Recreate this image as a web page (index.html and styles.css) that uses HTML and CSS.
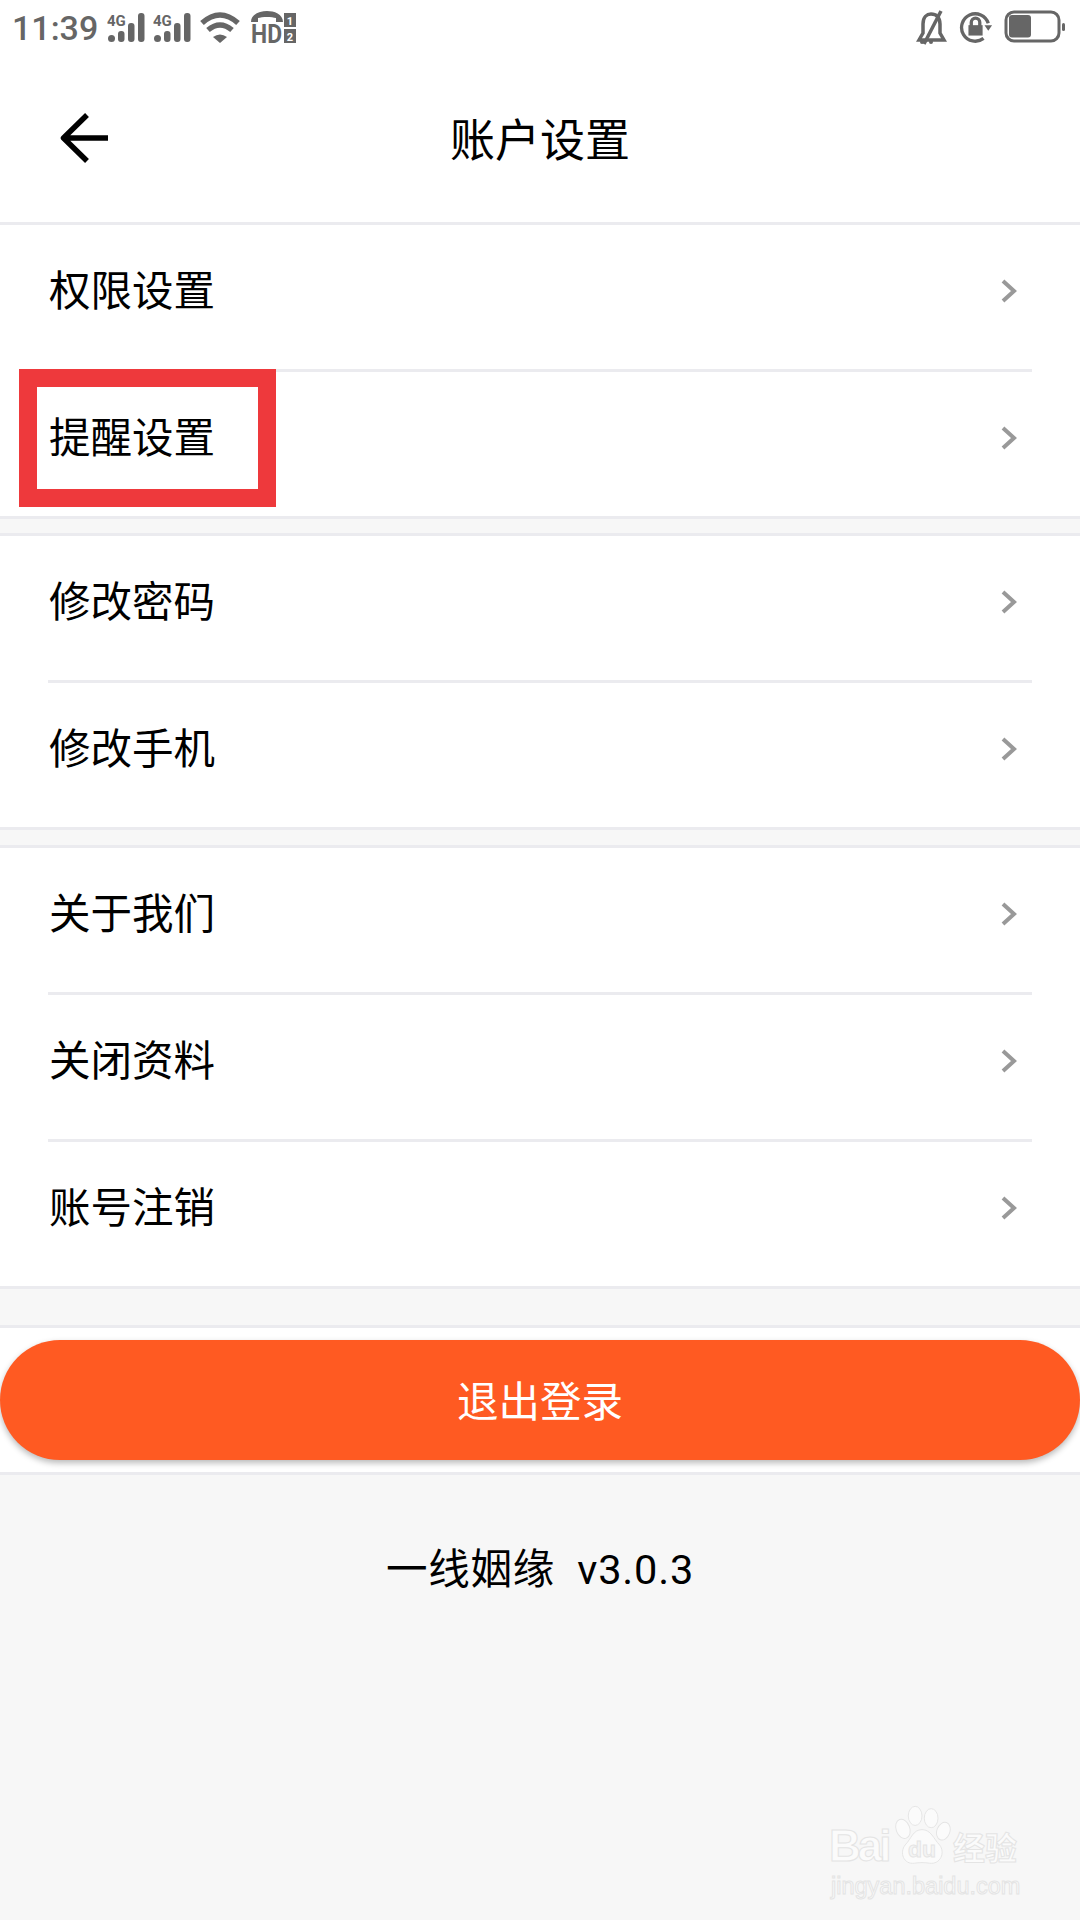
FILE: index.html
```html
<!DOCTYPE html>
<html lang="zh-CN">
<head>
<meta charset="utf-8">
<title>账户设置</title>
<link rel="stylesheet" href="styles.css">
</head>
<body>
<div class="page">
  <header class="top">
    <div class="status">
      <div class="status-left">
        <span class="time">11:39</span>
        <svg class="ic-signal" viewBox="0 0 40 34">
          <text class="t-4g" x="0" y="14">4G</text>
          <rect x="1" y="23" width="7" height="7" rx="3.5"/><rect x="11" y="19" width="6.5" height="11" rx="3"/><rect x="21" y="11" width="6.5" height="19" rx="3"/><rect x="31" y="1" width="6.5" height="29" rx="3"/>
        </svg>
        <svg class="ic-signal" viewBox="0 0 40 34">
          <text class="t-4g" x="0" y="14">4G</text>
          <rect x="1" y="23" width="7" height="7" rx="3.5"/><rect x="11" y="19" width="6.5" height="11" rx="3"/><rect x="21" y="11" width="6.5" height="19" rx="3"/><rect x="31" y="1" width="6.5" height="29" rx="3"/>
        </svg>
        <svg class="ic-wifi" viewBox="0 0 46 34">
          <path class="st" d="M3 11Q21 -5 39 11"/><path class="st" d="M9 18Q21 8 33 18"/><path d="M14 25Q21 20 28 25L21 31Z"/>
        </svg>
        <svg class="ic-hd" viewBox="0 0 46 44">
          <path d="M0 11C0 3 9 0 16 0S32 3 32 11H25V7C21 5.500 11 5.500 7 7V11Z"/>
          <text class="t-hd" x="0" y="32" textLength="31" lengthAdjust="spacingAndGlyphs">HD</text>
          <rect x="33" y="2" width="12" height="14"/><text class="t-num" x="39" y="13.500">1</text>
          <rect x="33" y="18" width="12" height="14"/><text class="t-num" x="39" y="29.500">2</text>
        </svg>
      </div>
      <div class="status-right">
        <svg class="ic-bell" viewBox="0 0 32 36">
          <path class="st-thin" d="M3 31L7 24V15C7 8 11 5 15 5C20 5 24 8 24 15V24L28 31Z"/>
          <path class="st-thin" d="M8 35L25 2"/>
          <circle cx="6" cy="33" r="2"/><circle cx="15" cy="33" r="2"/>
        </svg>
        <svg class="ic-lock" viewBox="0 0 36 36">
          <path class="st-thin" d="M26 29A14.500 14.500 0 1 1 31 13"/>
          <path d="M27 15L35 15L31 21Z"/>
          <rect x="10" y="15" width="15" height="11" />
          <path class="st-thin" d="M13 16V12A4.500 4.500 0 0 1 22 12V16"/>
        </svg>
        <svg class="ic-batt" viewBox="0 0 66 36">
          <rect class="batt-box" x="2" y="2" width="53" height="29" rx="8"/>
          <rect x="5" y="5" width="22" height="22.500" rx="3"/>
          <rect x="58" y="13" width="3" height="8" rx="1.500"/>
        </svg>
      </div>
    </div>
    <nav class="nav">
      <svg class="back" viewBox="0 0 54 52"><path d="M3 26H48M27 3L3.500 26L27 49"/></svg>
      <h1 class="title">账户设置</h1>
    </nav>
  </header>

  <section class="group">
    <div class="row"><span>权限设置</span><svg class="chev" viewBox="0 0 16 24"><path d="M2 2L13 12L2 22"/></svg></div>
    <div class="row"><span>提醒设置</span><svg class="chev" viewBox="0 0 16 24"><path d="M2 2L13 12L2 22"/></svg></div>
  </section>
  <section class="group">
    <div class="row"><span>修改密码</span><svg class="chev" viewBox="0 0 16 24"><path d="M2 2L13 12L2 22"/></svg></div>
    <div class="row"><span>修改手机</span><svg class="chev" viewBox="0 0 16 24"><path d="M2 2L13 12L2 22"/></svg></div>
  </section>
  <section class="group">
    <div class="row"><span>关于我们</span><svg class="chev" viewBox="0 0 16 24"><path d="M2 2L13 12L2 22"/></svg></div>
    <div class="row"><span>关闭资料</span><svg class="chev" viewBox="0 0 16 24"><path d="M2 2L13 12L2 22"/></svg></div>
    <div class="row"><span>账号注销</span><svg class="chev" viewBox="0 0 16 24"><path d="M2 2L13 12L2 22"/></svg></div>
  </section>

  <section class="group group-logout">
    <button class="logout">退出登录</button>
  </section>

  <p class="version">一线姻缘  v3.0.3</p>

  <div class="highlight"></div>

  <div class="wm">
    <div class="wm-top">
      <span class="wm-bai">Bai</span>
      <svg class="wm-paw" viewBox="0 0 76 82">
        <ellipse cx="13" cy="31" rx="9" ry="13" transform="rotate(-20 13 31)"/>
        <ellipse cx="29" cy="14" rx="9" ry="12.500"/>
        <ellipse cx="50" cy="17" rx="9" ry="12.500"/>
        <ellipse cx="66" cy="34" rx="8.500" ry="12" transform="rotate(20 66 34)"/>
        <path d="M38 32C50 32 53 44 61 52C69 62 62 78 48 76C42 75 34 75 28 76C14 78 8 62 16 52C24 44 26 32 38 32Z"/>
        <text class="wm-du" x="38" y="68">du</text>
      </svg>
      <span class="wm-cn">经验</span>
    </div>
    <div class="wm-url">jingyan.baidu.com</div>
  </div>
</div>
</body>
</html>
```
FILE: styles.css
```css
* { box-sizing: border-box; }
html, body { margin: 0; padding: 0; }
body { font-family: Roboto, "Noto Sans CJK SC", sans-serif; color: #000; }
.page { position: relative; width: 1080px; height: 1920px; overflow: hidden; background: #f7f7f7; }

.top { background: #fff; height: 222px; }
.status { display: flex; align-items: flex-start; height: 60px; padding: 9px 10px 0 12px; fill: #666; }
.status-left { display: flex; align-items: flex-start; gap: 6px; }
.status-right { display: flex; align-items: flex-start; gap: 9px; margin-left: auto; }
.time { font-size: 34px; line-height: 38px; font-weight: 500; color: #666; width: 89px; }
.status svg { display: block; height: 34px; flex: none; }
.ic-signal { width: 40px; margin-top: 3px; }
.ic-wifi { width: 46px; margin-top: 3px; }
.status .ic-hd { width: 46px; height: 44px; margin-top: 2px; }
.status .ic-bell { width: 32px; height: 36px; }
.ic-lock { width: 36px; margin-top: 2px; margin-left: 1px; }
.status .ic-batt { width: 66px; height: 36px; margin-left: 1px; margin-top: 1px; }
.t-4g { font: 700 15px Roboto, sans-serif; }
.t-hd { font: 700 26px Roboto, sans-serif; }
.t-num { font: 700 11px Roboto, sans-serif; fill: #fff; text-anchor: middle; }
.st { fill: none; stroke: #666; stroke-width: 5.500px; }
.st-thin { fill: none; stroke: #666; stroke-width: 3.500px; }
.batt-box { fill: none; stroke: #666; stroke-width: 3px; }

.nav { position: relative; display: flex; align-items: center; justify-content: center; height: 162px; padding-top: 2px; }
.back { position: absolute; left: 60px; top: 52px; width: 54px; height: 52px; fill: none; stroke: #000; stroke-width: 5.500px; stroke-linejoin: round; }
.title { margin: 0; font-size: 45px; font-weight: 400; line-height: 60px; }

.group { background: #fff; border-top: 3px solid #ebebef; border-bottom: 3px solid #ebebef; margin-bottom: 15px; }
.group:nth-of-type(1) { margin-bottom: 14px; }
.group:nth-of-type(3) { margin-bottom: 36px; }
.row { display: flex; align-items: center; justify-content: space-between; height: 144px; margin: 0 48px; padding: 0 12px 18px 1px; font-size: 41.500px; }
.row + .row { height: 147px; border-top: 3px solid #ebebef; }
.chev { display: block; width: 16px; height: 24px; fill: none; stroke: #999; stroke-width: 4px; flex: none; margin-top: 6px; margin-right: 3px; }

.group-logout { padding: 12px 0; margin-bottom: 0; }
.logout { display: block; width: 100%; height: 120px; border: 0; border-radius: 60px; background: #ff5a22; color: #fff; font: inherit; font-size: 41.500px; box-shadow: 0 3px 6px rgba(0,0,0,.28); padding: 0 0 3px; }

.version { margin: 68px 0 0; text-align: center; font-size: 41.500px; line-height: 54px; white-space: pre; letter-spacing: 0.8px; }

.highlight { position: absolute; left: 19px; top: 369px; width: 257px; height: 138px; border: 18px solid #ee393c; }

.wm { position: absolute; left: 829px; top: 1798px; width: 210px; color: #fbfbfb; -webkit-text-stroke: 1px #e4e4e4; }
.wm-top { display: flex; align-items: flex-end; height: 70px; }
.wm-bai { font: 700 44px/44px "Liberation Sans", sans-serif; letter-spacing: -3px; width: 64px; flex: none; }
.wm-paw { display: block; width: 58px; height: 63px; flex: none; fill: #fbfbfb; stroke: #e4e4e4; stroke-width: 1.200px; }
.wm-du { font: 700 30px "Liberation Sans", sans-serif; text-anchor: middle; fill: #f4f4f4; }
.wm-cn { font-size: 32px; line-height: 38px; font-weight: 700; margin-left: 2px; white-space: nowrap; }
.wm-url { font: 400 23.500px/28px "Liberation Sans", sans-serif; margin-top: 4px; margin-left: 2px; white-space: nowrap; }
```
